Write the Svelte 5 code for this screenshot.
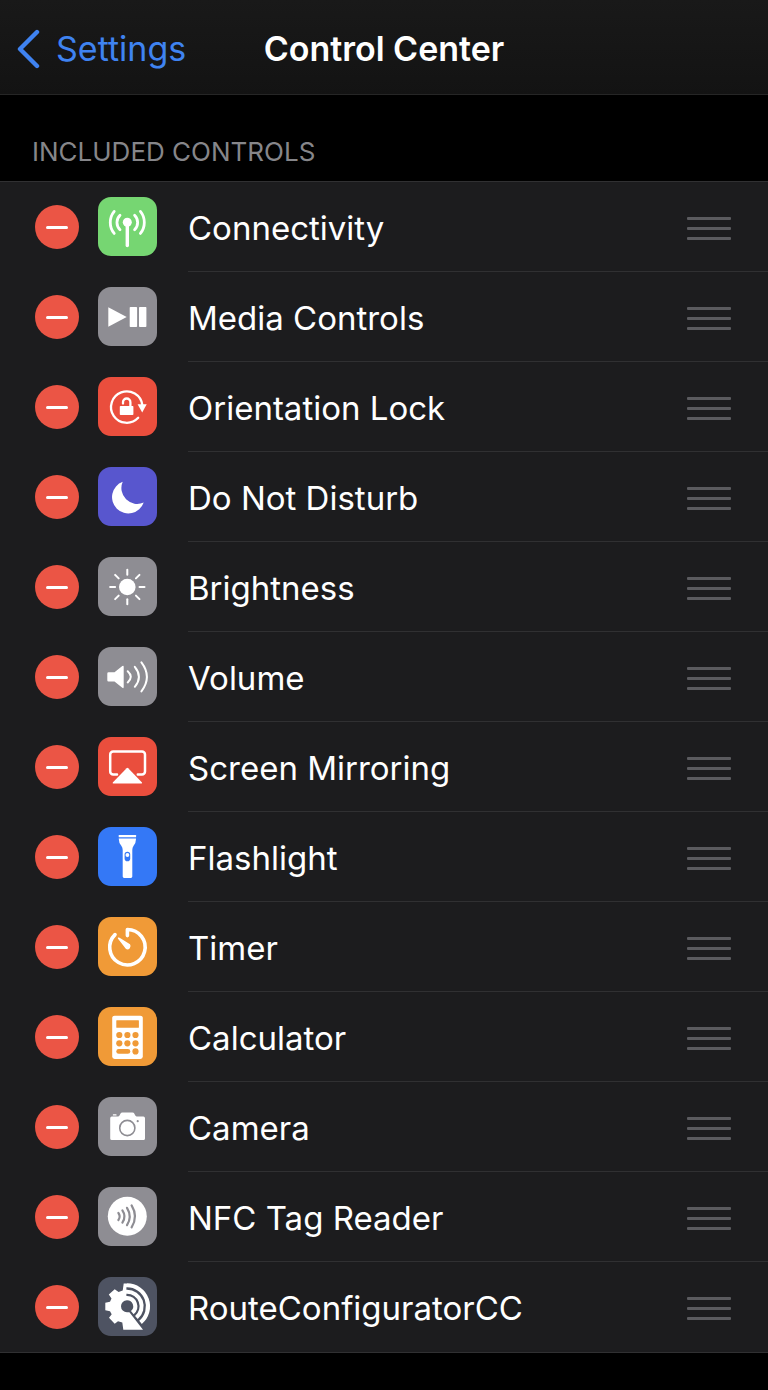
<script>
  const controls = [
    { name: 'Connectivity', icon: 'antenna', color: '#76d672' },
    { name: 'Media Controls', icon: 'media', color: '#8e8d93' },
    { name: 'Orientation Lock', icon: 'rotation', color: '#ea4e3d' },
    { name: 'Do Not Disturb', icon: 'moon', color: '#5856ce' },
    { name: 'Brightness', icon: 'sun', color: '#8e8d93' },
    { name: 'Volume', icon: 'speaker', color: '#8e8d93' },
    { name: 'Screen Mirroring', icon: 'mirror', color: '#ea4e3d' },
    { name: 'Flashlight', icon: 'torch', color: '#3478f6' },
    { name: 'Timer', icon: 'timer', color: '#f09a37' },
    { name: 'Calculator', icon: 'calculator', color: '#f09a37' },
    { name: 'Camera', icon: 'camera', color: '#8e8d93' },
    { name: 'NFC Tag Reader', icon: 'nfc', color: '#8e8d93' },
    { name: 'RouteConfiguratorCC', icon: 'gear', color: '#4e5362' }
  ];
  const rays = [0, 45, 90, 135, 180, 225, 270, 315];
</script>

<header class="bar">
  <a class="back" href="#settings">
    <svg width="24" height="40" viewBox="0 0 24 40" aria-hidden="true">
      <path d="M20 3 L3 20 L20 37" fill="none" stroke="currentColor" stroke-width="4.4" stroke-linecap="round" stroke-linejoin="round" />
    </svg>
    <span>Settings</span>
  </a>
  <h1>Control Center</h1>
</header>

<main>
  <h2>INCLUDED CONTROLS</h2>
  <ul>
    {#each controls as { name, icon, color }}
      <li>
        <button class="remove" aria-label={`Remove ${name}`}><span></span></button>
        <svg class="tile" viewBox="0 0 59 59" style:background={color} style:--tile={color} aria-hidden="true">
          {#if icon === 'antenna'}
            <circle class="fill" cx="29.3" cy="25.3" r="4.5" />
            <g class="line" stroke-width="2.8">
              <path stroke-width="3.4" d="M29.3 26V48.6" />
              <path d="M22 18.2A10.3 10.3 0 0 0 22 32.8M36.6 18.2A10.3 10.3 0 0 1 36.6 32.8" />
              <path d="M16.2 14.4A17.4 17.4 0 0 0 16.2 36.4M42.4 14.4A17.4 17.4 0 0 1 42.4 36.4" />
            </g>
          {:else if icon === 'media'}
            <path class="fill" d="M10.3 20.2L28.7 30L10.3 39.8Z" />
            <rect class="fill" x="31.7" y="20" width="7.4" height="20" rx="0.8" />
            <rect class="fill" x="41" y="20" width="7.4" height="20" rx="0.8" />
          {:else if icon === 'rotation'}
            <path class="line" stroke-width="2.3" d="M40.2 40.8A15.7 15.7 0 1 1 44.3 28" />
            <path class="fill" d="M39.6 27.2H48.7L44.2 35.6Z" />
            <rect class="fill" x="21.8" y="29" width="13.6" height="9" rx="0.8" />
            <path class="line" stroke-width="2.3" d="M25 26.6V25.2A3.7 3.7 0 0 1 32.4 25.2V30" />
          {:else if icon === 'moon'}
            <path class="fill" d="M24.7 14.8A16.3 16.3 0 1 0 45.7 35.5A15.8 15.8 0 0 1 24.7 14.8Z" />
          {:else if icon === 'sun'}
            <circle class="fill" cx="29.3" cy="30" r="8.3" />
            <g class="line" stroke-width="2">
              {#each rays as angle}
                <path d="M29.3 17.8V12.8" transform={`rotate(${angle} 29.3 30)`} />
              {/each}
            </g>
          {:else if icon === 'speaker'}
            <path class="fill" d="M10.5 25.2H16.5L24.3 19Q25.7 18 25.7 19.8V40Q25.7 41.8 24.3 40.8L16.5 34.4H10.5Q9.3 34.4 9.3 33.2V26.4Q9.3 25.2 10.5 25.2Z" />
            <g class="line" stroke-width="2">
              <path d="M29.7 24.2Q35.9 29.8 29.7 35.4" />
              <path d="M36.8 19.8Q45 29.8 36.8 39.8" />
              <path d="M43.4 15.4Q54.4 29.8 43.4 44.4" />
            </g>
          {:else if icon === 'mirror'}
            <path class="line" stroke-width="2.5" d="M19 37.6H15.2A3 3 0 0 1 12.2 34.6V17.4A3 3 0 0 1 15.2 14.4H44A3 3 0 0 1 47 17.4V34.6A3 3 0 0 1 44 37.6H39.8" />
            <path class="fill" d="M28.6 31.2Q29.4 30.4 30.2 31.2L44 45.6Q44.6 46.6 43.4 46.6H15.4Q14.2 46.6 14.8 45.6Z" />
          {:else if icon === 'torch'}
            <rect class="fill" x="20.7" y="8" width="17.4" height="2.2" rx="0.5" />
            <path class="fill" d="M20.7 11.6H38.1Q38 16 35.6 18.8Q34.3 20.5 34.3 23V49.6Q34.3 51 32.9 51H26.1Q24.7 51 24.7 49.6V23Q24.7 20.5 23.3 18.8Q20.8 16 20.7 11.6Z" />
            <rect class="cut" x="26.6" y="24.8" width="5.6" height="9.4" rx="2.8" />
            <circle class="fill" cx="29.4" cy="28" r="1.9" />
          {:else if icon === 'timer'}
            <path class="line" stroke-width="3.6" d="M29.4 18.6V12.5A17.7 17.7 0 1 1 17 17.6" />
            <path class="fill" d="M20 20.5Q20.8 20.2 21.6 20.8L32 27.2A3.3 3.3 0 0 1 28 32.1L20.2 22Q19.5 21 20 20.5Z" />
          {:else if icon === 'calculator'}
            <rect class="fill" x="14.2" y="8.7" width="30.6" height="43.3" rx="2.4" />
            <rect class="cut" x="18.3" y="13.2" width="22.6" height="7.6" rx="0.6" />
            {#each [28, 36.3] as y}
              {#each [21.3, 29.4, 37.5] as x}
                <circle class="cut" cx={x} cy={y} r="3.1" />
              {/each}
            {/each}
            <rect class="cut" x="18.3" y="42" width="14" height="4.8" rx="2.4" />
            <circle class="cut" cx="37.5" cy="44.4" r="3.1" />
          {:else if icon === 'camera'}
            <path class="fill" d="M13.8 19.6H20.2Q21.2 19.4 21.8 18L22.4 16.8Q23 15.6 24.4 15.6H34.4Q35.8 15.6 36.4 16.8L37 18Q37.6 19.4 38.6 19.6H45.4Q47 19.6 47 21.2V41.4Q47 43 45.4 43H13.8Q12.2 43 12.2 41.4V21.2Q12.2 19.6 13.8 19.6Z" />
            <rect class="fill" x="14.8" y="17.2" width="3.8" height="1.4" rx="0.6" />
            <circle cx="29.3" cy="31" r="7.6" fill="none" stroke="var(--tile)" stroke-width="1.6" />
            <circle class="cut" cx="39.7" cy="24.2" r="1.1" />
          {:else if icon === 'nfc'}
            <circle class="fill" cx="29.3" cy="29.3" r="19.5" />
            <g fill="none" stroke="var(--tile)" stroke-width="2.2" stroke-linecap="round">
              <path d="M20.4 26Q23 29.5 20.4 33" />
              <path d="M24.4 23.4Q28.6 29.5 24.4 35.6" />
              <path d="M29 20.8Q34.4 29.5 29 38.2" />
              <path d="M33.6 18.4Q40.4 29.5 33.6 40.4" />
            </g>
          {:else}
            <path class="fill" d="M25.7 6.4H29V23.3A6 6 0 0 0 29 35.3L31.4 35.2L45 52.7H25.3L24.3 45.6L20 44.3L16.7 46.7L11 40.7L13.7 37.3L12 34.2L7.3 33.3V25.7L12 24.8L13.5 21.5L10.8 17.4L16.7 12.2L20.6 15L24.7 13.6Z" />
            <path class="cut" d="M28.4 10.3H30V12.7H28.4ZM28.4 16.7H30V19H28.4Z" />
            <g fill="none" stroke="#fff" stroke-width="4.1">
              <path d="M29 21.1A8.2 8.2 0 0 1 34.3 35.6" />
              <path d="M29 14.7A14.6 14.6 0 0 1 38.4 40.5" />
              <path d="M29 8.3A21 21 0 0 1 42.5 45.4" />
            </g>
          {/if}
        </svg>
        <div class="cell">
          <span>{name}</span>
          <button class="grip" aria-label={`Reorder ${name}`}><i></i><i></i><i></i></button>
        </div>
      </li>
    {/each}
  </ul>
</main>

<style>
  :global(body) {
    margin: 0;
    background: #000;
    color: #fff;
    font-family: Inter, "Liberation Sans", sans-serif;
  }
  .bar {
    display: grid;
    grid-template-columns: 1fr auto 1fr;
    align-items: center;
    height: 94px;
    padding: 0 17px;
    background: linear-gradient(#191919, #131313);
    border-bottom: 1px solid #262626;
    box-sizing: content-box;
  }
  .back {
    display: flex;
    align-items: center;
    gap: 15px;
    color: #3f83f1;
    font-size: 34px;
    line-height: 40px;
    text-decoration: none;
    padding-top: 4px;
  }
  h1 {
    margin: 0;
    padding-top: 4px;
    font-size: 34px;
    line-height: 40px;
    font-weight: 600;
  }
  h2 {
    margin: 0;
    padding: 41px 32px 14px;
    color: #86868a;
    font-size: 26px;
    line-height: 31px;
    font-weight: 400;
  }
  ul {
    margin: 0;
    padding: 0;
    list-style: none;
    background: #1c1c1e;
    border-top: 1px solid #303032;
    border-bottom: 1px solid #303032;
  }
  li {
    display: flex;
    align-items: center;
    height: 90px;
    padding-left: 35px;
  }
  button {
    border: 0;
    padding: 0;
    background: none;
  }
  .remove {
    display: grid;
    place-items: center;
    flex: none;
    width: 44px;
    height: 44px;
    border-radius: 50%;
    background: #eb5545;
  }
  .remove span {
    width: 22px;
    height: 3px;
    border-radius: 2px;
    background: #fff;
  }
  .tile {
    flex: none;
    width: 59px;
    height: 59px;
    margin: 0 31px 2px 19px;
    border-radius: 13px;
  }
  .fill {
    fill: #fff;
  }
  .cut {
    fill: var(--tile);
  }
  .line {
    fill: none;
    stroke: #fff;
    stroke-linecap: round;
    stroke-linejoin: round;
  }
  .cell {
    flex: 1;
    display: flex;
    align-items: center;
    justify-content: space-between;
    box-sizing: border-box;
    height: 90px;
    padding: 3px 37px 0 0;
    border-bottom: 1px solid #303032;
    font-size: 33px;
    line-height: 40px;
  }
  li:last-child .cell {
    border-bottom-color: transparent;
  }
  .grip {
    display: flex;
    flex-direction: column;
    gap: 7px;
  }
  .grip i {
    width: 44px;
    height: 3px;
    border-radius: 1px;
    background: #5b5b5f;
  }
</style>
